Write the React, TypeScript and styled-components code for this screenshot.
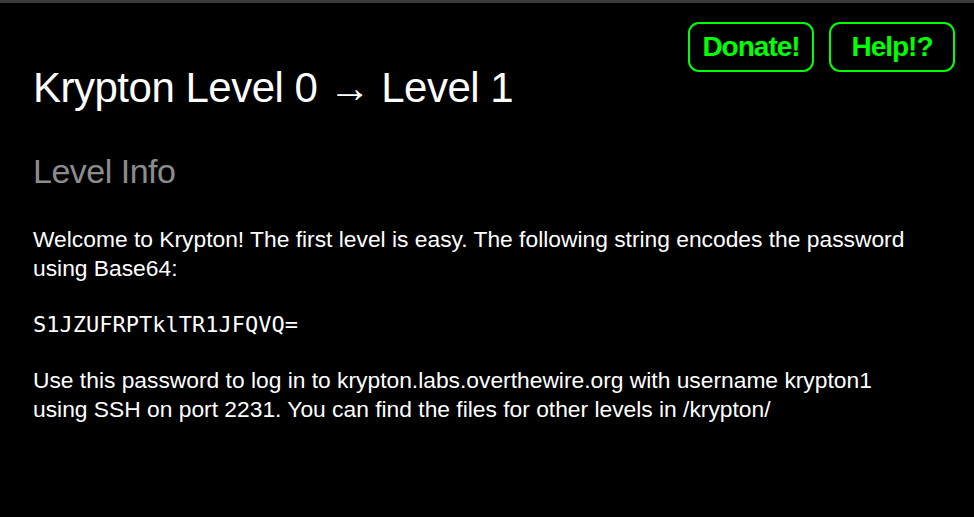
import React from "react";
import styled, { createGlobalStyle } from "styled-components";

const Global = createGlobalStyle`
  html, body { margin: 0; padding: 0; background: #000; }
  body { font-family: "Liberation Sans", Arial, sans-serif; color: #fff; }
`;

const TopBar = styled.div`
  height: 3px;
  background: #3b3b3b;
`;

const Page = styled.main`
  padding: 0 19px 0 33px;
`;

const Header = styled.header`
  display: flex;
  justify-content: space-between;
  align-items: flex-start;
`;

const Title = styled.h1`
  margin: 59px 0 0;
  font-size: 42px;
  line-height: 52px;
  font-weight: 400;
  letter-spacing: -0.5px;
  white-space: nowrap;
`;

const Actions = styled.nav`
  display: flex;
  gap: 15px;
  padding-top: 19px;
`;

const Action = styled.a`
  display: flex;
  align-items: center;
  justify-content: center;
  box-sizing: border-box;
  width: 126px;
  height: 50px;
  border: 2px solid #00ff00;
  border-radius: 11px;
  color: #00ff00;
  font-size: 28px;
  font-weight: 700;
  letter-spacing: -1px;
  text-decoration: none;
`;

const SubTitle = styled.h2`
  margin: 37px 0 0;
  font-size: 34px;
  line-height: 40px;
  font-weight: 400;
  color: #8c8c8c;
  letter-spacing: -0.5px;
`;

const Para = styled.p<{ $gap: number }>`
  margin: ${(p) => p.$gap}px 0 0;
  max-width: 885px;
  font-size: 22.8px;
  line-height: 29px;
`;

const Code = styled.p`
  margin: 27px 0 0;
  font-family: "DejaVu Sans Mono", "Liberation Mono", monospace;
  font-size: 22px;
  line-height: 30px;
  font-weight: 400;
`;

export default function App() {
  return (
    <>
      <Global />
      <TopBar />
      <Page>
        <Header>
          <Title>Krypton Level 0 → Level 1</Title>
          <Actions>
            <Action href="#">Donate!</Action>
            <Action href="#">Help!?</Action>
          </Actions>
        </Header>
        <SubTitle>Level Info</SubTitle>
        <Para $gap={34}>
          Welcome to Krypton! The first level is easy. The following string encodes the password using Base64:
        </Para>
        <Code>S1JZUFRPTklTR1JFQVQ=</Code>
        <Para $gap={26}>
          Use this password to log in to krypton.labs.overthewire.org with username krypton1 using SSH on port 2231. You can find the files for other levels in /krypton/
        </Para>
      </Page>
    </>
  );
}
